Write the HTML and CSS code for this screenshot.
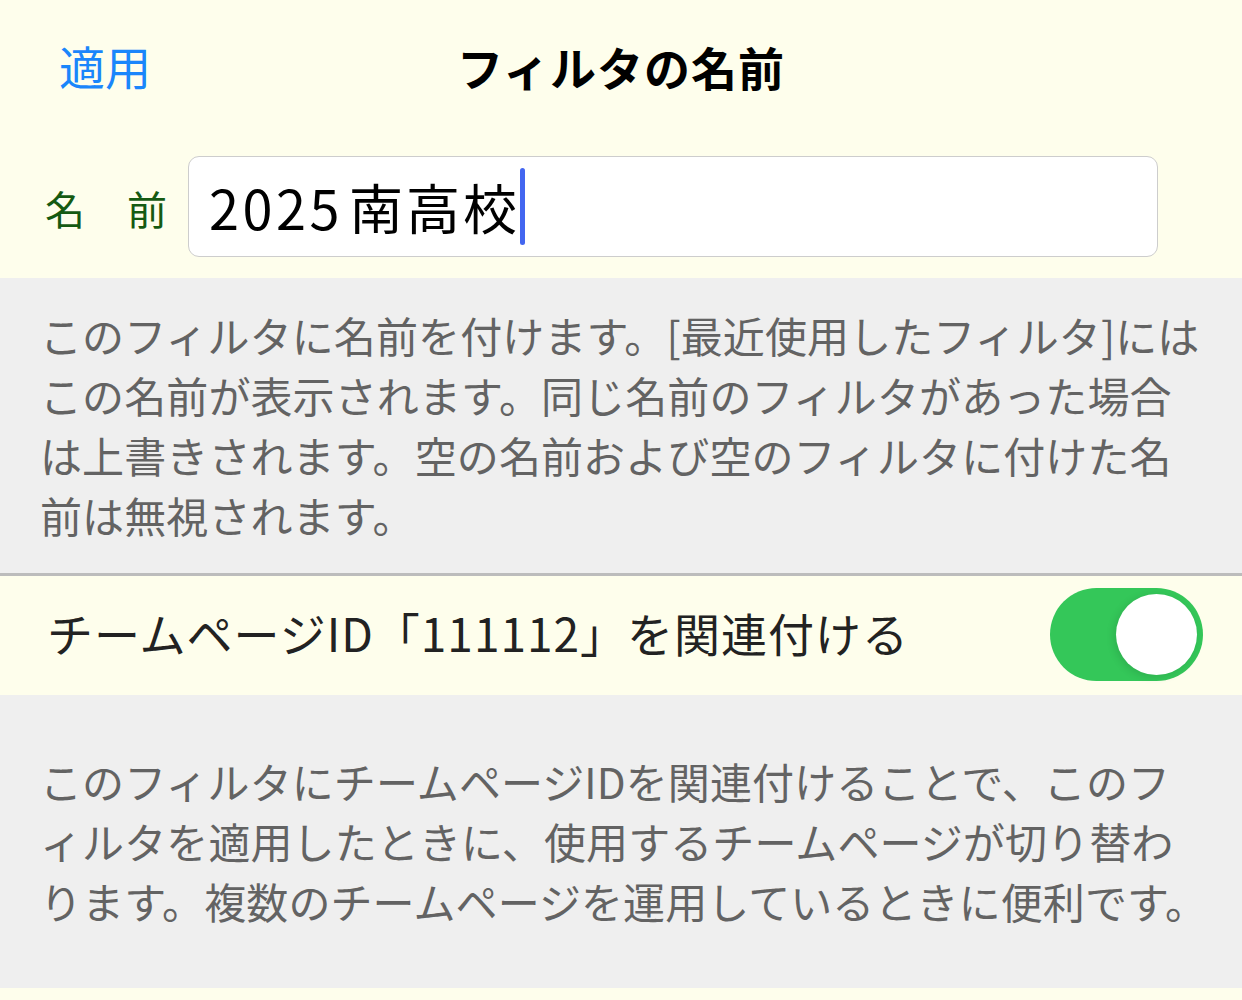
FILE: index.html
```html
<!DOCTYPE html>
<html lang="ja">
<head>
<meta charset="utf-8">
<title>フィルタの名前</title>
<link rel="stylesheet" href="styles.css">
</head>
<body>
<div class="screen">
  <header class="navbar">
    <div class="nav-left"><span class="apply">適用</span></div>
    <h1 class="title">フィルタの名前</h1>
    <div class="nav-right"></div>
  </header>
  <section class="name-row">
    <span class="name-label">名　前</span>
    <div class="name-input">
      <span class="name-value"><span class="digits">2025</span><span class="kanji">南高校</span></span><span class="caret"></span>
    </div>
  </section>
  <section class="note note-first">
    <p class="note-text">このフィルタに名前を付けます。[最近使用したフィルタ]には<br>この名前が表示されます。同じ名前のフィルタがあった場合<br>は上書きされます。空の名前および空のフィルタに付けた名<br>前は無視されます。</p>
  </section>
  <section class="toggle-row">
    <span class="toggle-label">チームページID「111112」を関連付ける</span>
    <div class="switch"><span class="knob"></span></div>
  </section>
  <section class="note note-second">
    <p class="note-text">このフィルタにチームページIDを関連付けることで、このフ<br>ィルタを適用したときに、使用するチームページが切り替わ<br>ります。複数のチームページを運用しているときに便利です。</p>
  </section>
  <div class="tail"></div>
</div>
</body>
</html>
```
FILE: styles.css
```css
* { box-sizing: border-box; }
html, body {
  margin: 0;
  padding: 0;
  background: #fefeec;
}
body {
  font-family: "Noto Sans CJK JP", "Noto Sans", sans-serif;
  width: 1242px;
  height: 1000px;
  overflow: hidden;
}
.screen {
  display: flex;
  flex-direction: column;
}
.navbar {
  height: 140px;
  display: grid;
  grid-template-columns: 1fr auto 1fr;
  align-items: center;
  padding: 0 59px 8px 59px;
  background: #fefeec;
}
.apply {
  font-size: 46px;
  color: #1a86fb;
  line-height: 1;
}
.title {
  margin: 0;
  font-size: 46px;
  font-weight: 700;
  color: #000;
  letter-spacing: 1px;
  line-height: 1;
}
.name-row {
  display: flex;
  align-items: center;
  padding: 16px 84px 21px 45px;
  gap: 21px;
  background: #fefeec;
}
.name-label {
  font-size: 40px;
  color: #155a12;
  width: 122px;
  letter-spacing: 1px;
  white-space: nowrap;
  line-height: 1;
  padding-top: 2px;
}
.name-input {
  flex: 1;
  height: 101px;
  background: #fff;
  border: 1px solid #cdcdcd;
  border-radius: 11px;
  display: flex;
  align-items: center;
  padding-left: 20px;
}
.name-value {
  font-size: 54px;
  color: #000;
  line-height: 1;
  white-space: nowrap;
}
.digits {
  letter-spacing: 3.5px;
}
.kanji {
  margin-left: 6px;
  letter-spacing: 3px;
}
.caret {
  width: 5px;
  height: 77px;
  border-radius: 3px;
  background: #4366f0;
}
.note {
  background: #efefef;
  padding-left: 40px;
}
.note-first {
  height: 298px;
  padding-top: 27px;
  border-bottom: 3px solid #bcbcbc;
}
.note-second {
  height: 293px;
  padding-top: 56px;
}
.note-text {
  margin: 0;
  font-size: 42px;
  line-height: 60px;
  letter-spacing: 0.1px;
  color: #636363;
  white-space: nowrap;
}
.toggle-row {
  height: 119px;
  display: flex;
  align-items: center;
  justify-content: space-between;
  padding: 0 39px 0 47px;
  background: #fefeec;
}
.toggle-label {
  font-size: 46px;
  letter-spacing: 1px;
  color: #222;
  white-space: nowrap;
  margin-bottom: 8px;
}
.switch {
  position: relative;
  width: 153px;
  height: 93px;
  border-radius: 47px;
  background: #34c759;
  margin-bottom: 3px;
}
.knob {
  position: absolute;
  right: 6px;
  top: 6px;
  width: 81px;
  height: 81px;
  border-radius: 50%;
  background: #fff;
  box-shadow: -2px 2px 8px rgba(0, 0, 0, 0.12);
}
.tail {
  height: 12px;
  background: #fefeec;
}
```
